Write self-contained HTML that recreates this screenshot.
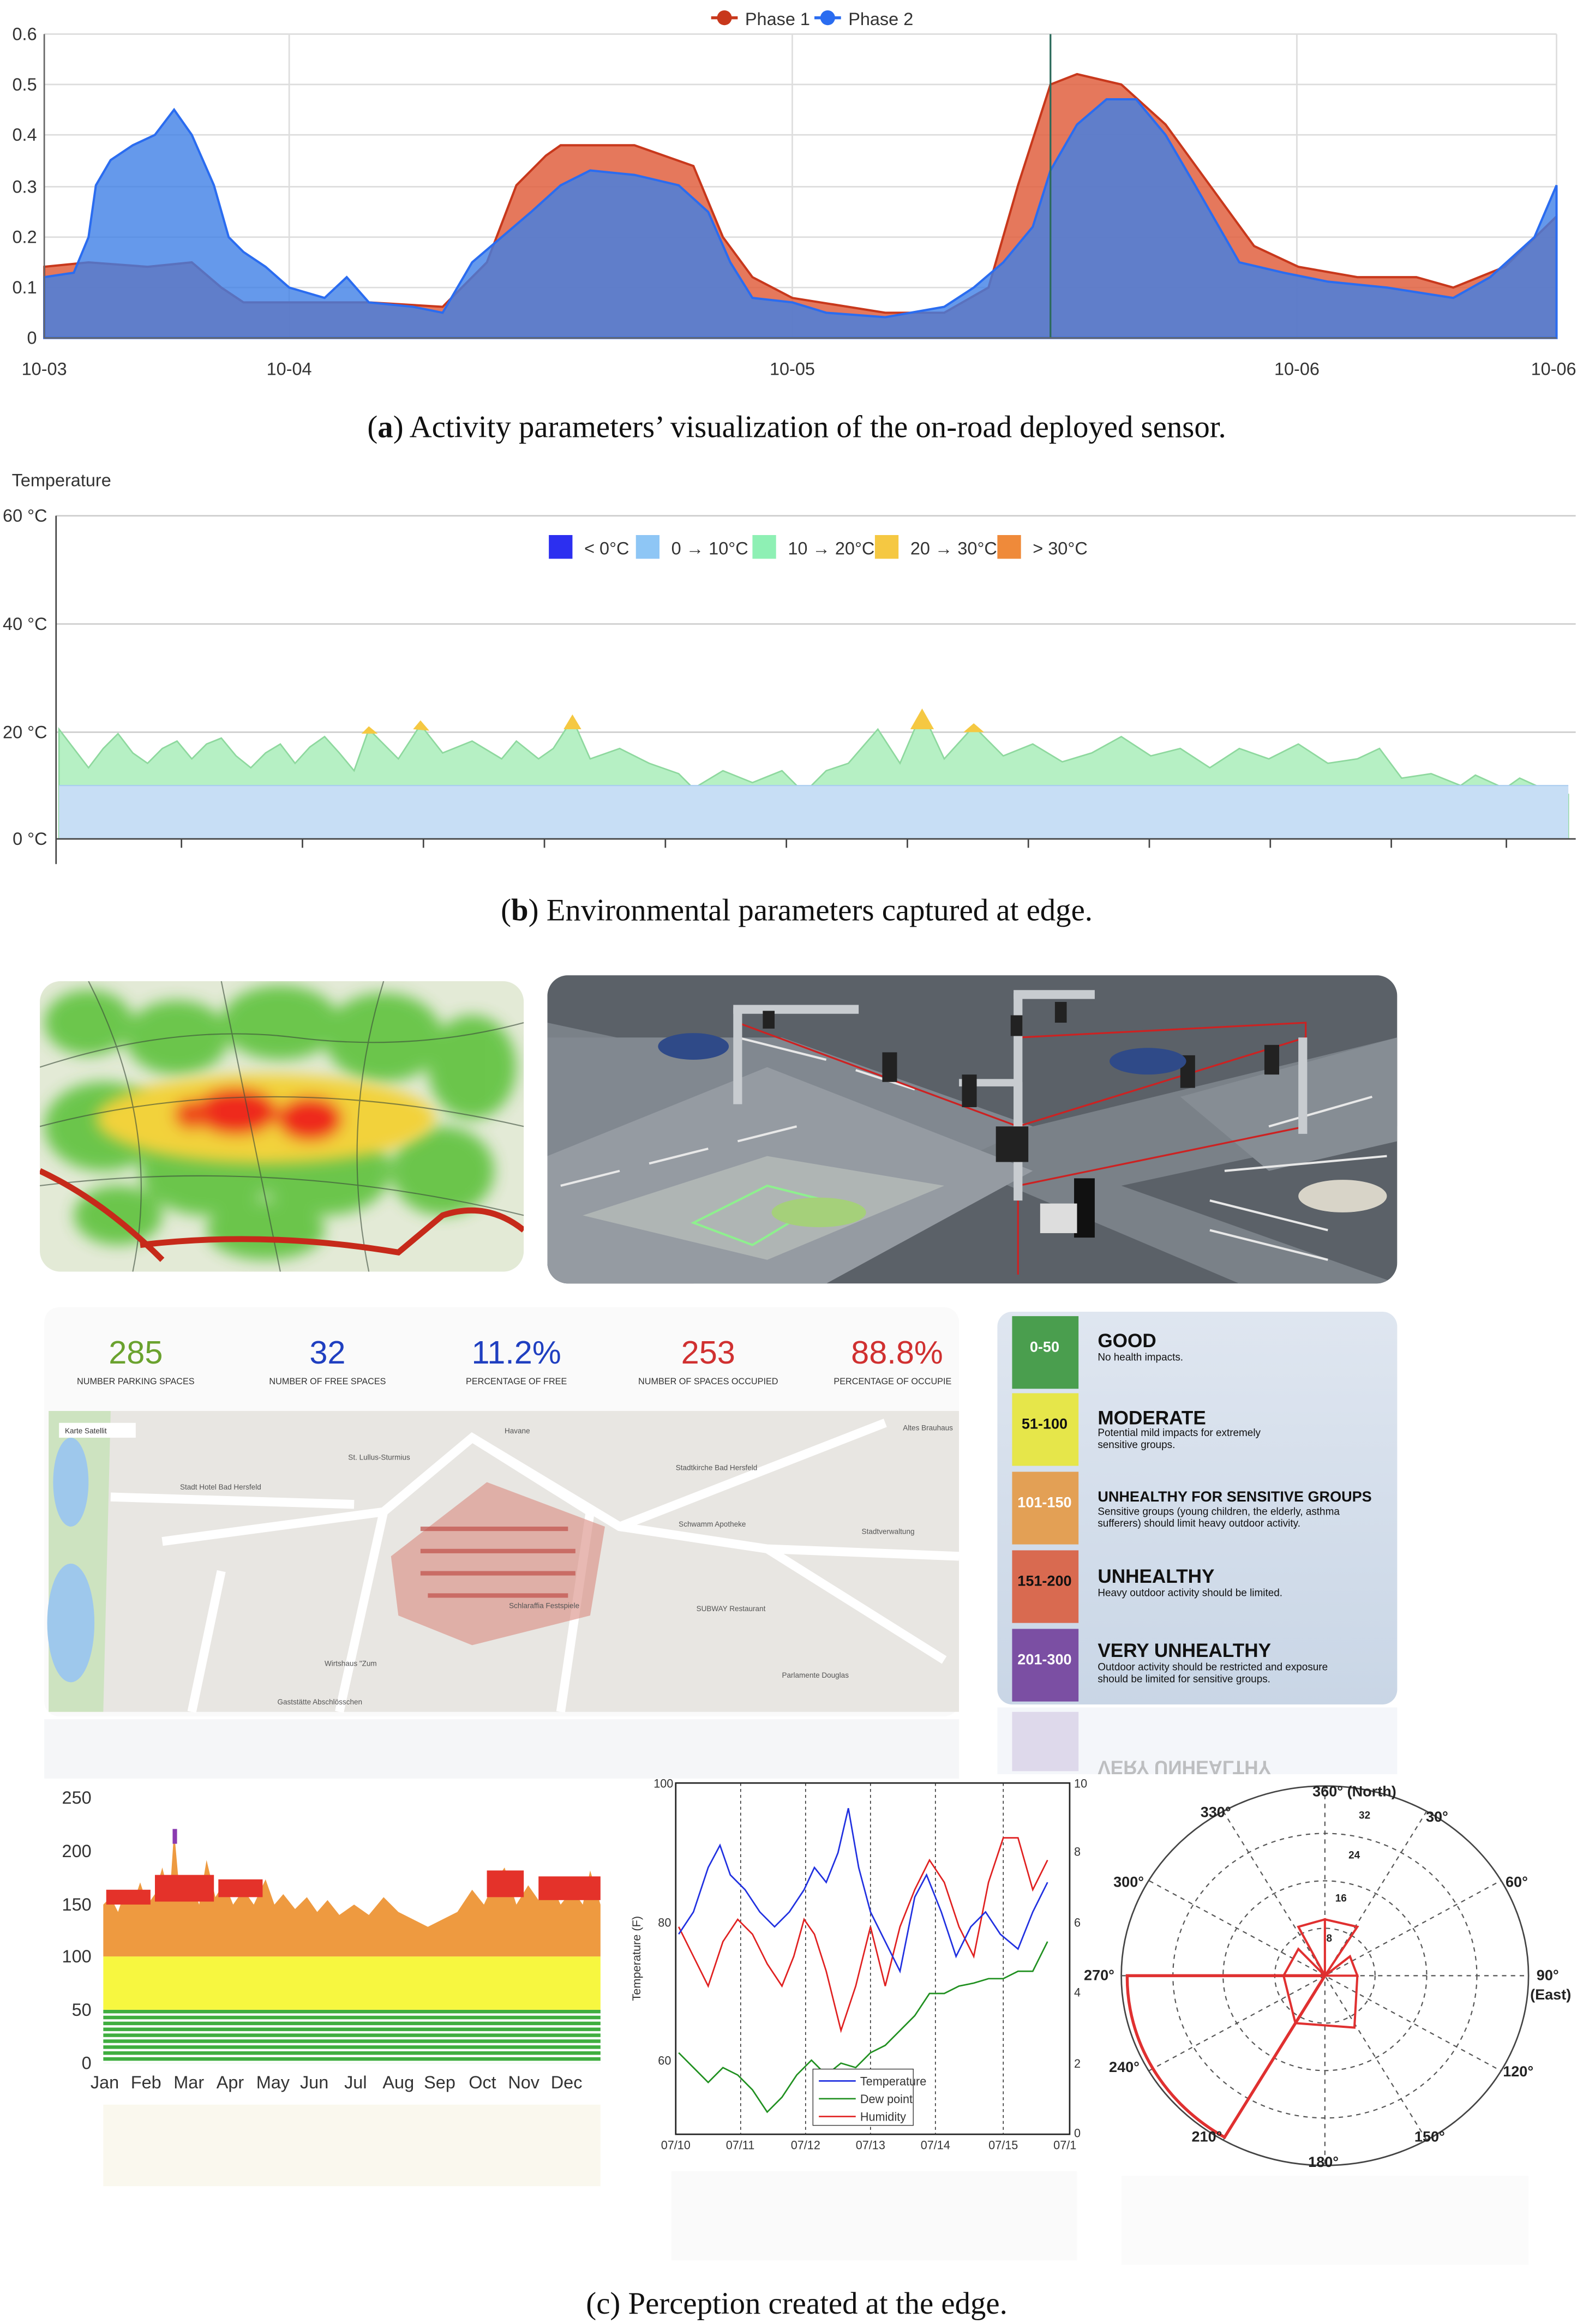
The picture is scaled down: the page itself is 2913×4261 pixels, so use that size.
<!DOCTYPE html>
<html><head><meta charset="utf-8">
<style>
html,body{margin:0;padding:0;background:#fff;}
svg{display:block;}
text{font-family:"Liberation Sans",sans-serif;}
.cap{font-family:"Liberation Serif",serif;font-size:21px;fill:#111;}
.ax{font-size:12px;fill:#333;}
</style></head>
<body>
<svg width="2913" height="4261" viewBox="0 0 1077 1568" preserveAspectRatio="none" xmlns="http://www.w3.org/2000/svg">
<defs>
<filter id="bl" x="-50%" y="-50%" width="200%" height="200%"><feGaussianBlur stdDeviation="9"/></filter>
<filter id="bl3" x="-50%" y="-50%" width="200%" height="200%"><feGaussianBlur stdDeviation="5"/></filter>
<linearGradient id="aqibg" x1="0" y1="0" x2="0" y2="1"><stop offset="0" stop-color="#dfe6f0"/><stop offset="1" stop-color="#c9d6e6"/></linearGradient>
<pattern id="grs" width="4" height="4" patternUnits="userSpaceOnUse"><rect width="4" height="4" fill="#fff"/><rect width="4" height="2.4" fill="#3fae3f"/></pattern>
</defs>

<!-- ===== (a) ===== -->
<g>
<line x1="30" y1="23" x2="1055" y2="23" stroke="#ddd"/>
<line x1="30" y1="57" x2="1055" y2="57" stroke="#ddd"/>
<line x1="30" y1="91" x2="1055" y2="91" stroke="#ddd"/>
<line x1="30" y1="126" x2="1055" y2="126" stroke="#ddd"/>
<line x1="30" y1="160" x2="1055" y2="160" stroke="#ddd"/>
<line x1="30" y1="194" x2="1055" y2="194" stroke="#ddd"/>
<line x1="196" y1="23" x2="196" y2="228" stroke="#ddd"/>
<line x1="537" y1="23" x2="537" y2="228" stroke="#ddd"/>
<line x1="879" y1="23" x2="879" y2="228" stroke="#ddd"/>
<line x1="1055" y1="23" x2="1055" y2="228" stroke="#ddd"/>
<path d="M30,228 L30,180 L60,177 L100,180 L130,177 L150,194 L165,204 L196,204 L250,204 L300,207 L330,177 L350,125 L370,105 L380,98 L430,98 L470,112 L490,160 L510,187 L537,201 L600,211 L640,211 L670,194 L690,125 L712,57 L730,50 L760,57 L790,84 L820,125 L850,166 L880,180 L920,187 L960,187 L985,194 L1020,180 L1055,146 L1055,228 Z" fill="#e0603f" fill-opacity="0.85" stroke="#c8381c" stroke-width="1.5"/>
<path d="M30,228 L30,187 L50,184 L60,160 L65,125 L75,108 L90,98 L105,91 L118,74 L130,91 L145,125 L155,160 L165,170 L180,180 L196,194 L220,201 L235,187 L250,204 L280,207 L300,211 L320,177 L340,160 L360,143 L380,125 L400,115 L430,118 L460,125 L480,143 L495,177 L510,201 L537,204 L560,211 L600,214 L640,207 L660,194 L680,177 L700,153 L712,115 L730,84 L750,67 L770,67 L790,91 L810,125 L840,177 L870,184 L900,190 L940,194 L985,201 L1010,187 L1040,160 L1055,125 L1055,228 Z" fill="#3f7fe6" fill-opacity="0.8" stroke="#2a6cf0" stroke-width="1.5"/>
<line x1="712" y1="23" x2="712" y2="228" stroke="#2b6a5a" stroke-width="1.2"/>
<line x1="30" y1="23" x2="30" y2="228" stroke="#666"/>
<line x1="30" y1="228" x2="1055" y2="228" stroke="#666"/>
<g class="ax" text-anchor="end"><text x="25" y="27">0.6</text><text x="25" y="61">0.5</text><text x="25" y="95">0.4</text><text x="25" y="130">0.3</text><text x="25" y="164">0.2</text><text x="25" y="198">0.1</text><text x="25" y="232">0</text></g>
<g class="ax" text-anchor="middle"><text x="30" y="253">10-03</text><text x="196" y="253">10-04</text><text x="537" y="253">10-05</text><text x="879" y="253">10-06</text><text x="1053" y="253">10-06</text></g>
<line x1="482" y1="12" x2="500" y2="12" stroke="#c8381c" stroke-width="2"/><circle cx="491" cy="12" r="5" fill="#c8381c"/>
<text x="505" y="17" class="ax" font-size="13">Phase 1</text>
<line x1="552" y1="12" x2="570" y2="12" stroke="#2a6cf0" stroke-width="2"/><circle cx="561" cy="12" r="5" fill="#2a6cf0"/>
<text x="575" y="17" class="ax" font-size="13">Phase 2</text>
<text x="540" y="295" class="cap" text-anchor="middle">(<tspan font-weight="bold">a</tspan>) Activity parameters’ visualization of the on-road deployed sensor.</text>
</g>

<!-- ===== (b) ===== -->
<g>
<text x="8" y="328" class="ax">Temperature</text>
<line x1="38" y1="348" x2="1068" y2="348" stroke="#ccc"/>
<line x1="38" y1="421" x2="1068" y2="421" stroke="#ccc"/>
<line x1="38" y1="494" x2="1068" y2="494" stroke="#ccc"/>
<line x1="38" y1="348" x2="38" y2="583" stroke="#444"/>
<g class="ax" text-anchor="end"><text x="32" y="352">60 °C</text><text x="32" y="425">40 °C</text><text x="32" y="498">20 °C</text><text x="32" y="570">0 °C</text></g>
<path d="M40,566 L40,492 L50,505 L60,518 L70,505 L80,495 L90,508 L100,515 L110,505 L120,500 L130,512 L140,502 L150,498 L160,510 L170,518 L180,508 L190,502 L200,515 L210,504 L220,497 L230,508 L240,520 L250,492 L260,502 L270,512 L285,489 L300,508 L320,500 L340,512 L350,500 L365,512 L375,505 L388,485 L400,512 L420,505 L440,515 L460,522 L470,532 L490,520 L510,528 L530,520 L545,535 L560,520 L575,515 L595,492 L610,515 L625,480 L640,512 L660,490 L680,510 L700,502 L720,514 L740,508 L760,497 L780,510 L800,505 L820,518 L840,505 L860,512 L880,502 L900,515 L920,512 L935,505 L950,525 L970,522 L990,530 L1000,523 L1020,532 L1030,525 L1050,534 L1063,536 L1063,566 Z" fill="#b6f0c4" stroke="#8ed89e" stroke-width="1"/>
<path d="M245,495 L250,490 L256,495 Z M280,492 L285,486 L291,493 Z M382,492 L388,482 L394,492 Z M617,492 L625,478 L633,492 Z M653,494 L660,488 L667,494 Z" fill="#f5c842"/>
<rect x="40" y="530" width="1023" height="36" fill="#c7def5"/>
<line x1="40" y1="530" x2="1063" y2="530" stroke="#a8ccef" stroke-width="0.7"/>
<line x1="38" y1="566" x2="1068" y2="566" stroke="#444"/>
<g stroke="#444"><line x1="123" y1="566" x2="123" y2="572"/><line x1="205" y1="566" x2="205" y2="572"/><line x1="287" y1="566" x2="287" y2="572"/><line x1="369" y1="566" x2="369" y2="572"/><line x1="451" y1="566" x2="451" y2="572"/><line x1="533" y1="566" x2="533" y2="572"/><line x1="615" y1="566" x2="615" y2="572"/><line x1="697" y1="566" x2="697" y2="572"/><line x1="779" y1="566" x2="779" y2="572"/><line x1="861" y1="566" x2="861" y2="572"/><line x1="943" y1="566" x2="943" y2="572"/><line x1="1021" y1="566" x2="1021" y2="572"/></g>
<rect x="372" y="361" width="16" height="16" fill="#2c2ff0"/><text x="396" y="374" class="ax">&lt; 0°C</text>
<rect x="431" y="361" width="16" height="16" fill="#8ec6f5"/><text x="455" y="374" class="ax">0 → 10°C</text>
<rect x="510" y="361" width="16" height="16" fill="#8ef0b4"/><text x="534" y="374" class="ax">10 → 20°C</text>
<rect x="593" y="361" width="16" height="16" fill="#f5c842"/><text x="617" y="374" class="ax">20 → 30°C</text>
<rect x="676" y="361" width="16" height="16" fill="#ef8a3a"/><text x="700" y="374" class="ax">&gt; 30°C</text>
<text x="540" y="621" class="cap" text-anchor="middle">(<tspan font-weight="bold">b</tspan>) Environmental parameters captured at edge.</text>
</g>

<!-- heatmap -->
<g>
<clipPath id="c1"><rect x="27" y="662" width="328" height="196" rx="14"/></clipPath>
<g clip-path="url(#c1)">
<rect x="27" y="662" width="328" height="196" fill="#e3ead6"/>
<g filter="url(#bl3)" fill="#5fc23c" opacity="0.9">
<ellipse cx="60" cy="690" rx="30" ry="22"/><ellipse cx="120" cy="700" rx="35" ry="25"/><ellipse cx="190" cy="690" rx="40" ry="25"/><ellipse cx="260" cy="700" rx="40" ry="30"/><ellipse cx="320" cy="720" rx="30" ry="35"/>
<ellipse cx="70" cy="760" rx="40" ry="30"/><ellipse cx="140" cy="790" rx="45" ry="30"/><ellipse cx="220" cy="790" rx="45" ry="30"/><ellipse cx="300" cy="790" rx="35" ry="30"/><ellipse cx="180" cy="830" rx="40" ry="20"/><ellipse cx="80" cy="820" rx="30" ry="20"/>
</g>
<g filter="url(#bl3)">
<ellipse cx="180" cy="755" rx="115" ry="30" fill="#f2d23a"/>
<ellipse cx="160" cy="750" rx="28" ry="16" fill="#ee2a1a"/>
<ellipse cx="210" cy="755" rx="22" ry="15" fill="#ee2a1a"/>
<ellipse cx="130" cy="752" rx="12" ry="10" fill="#ee4a1a"/>
</g>
<g fill="none" stroke="#3a4a3a" stroke-width="0.8" opacity="0.6">
<path d="M27,720 Q120,690 200,700 T355,690"/><path d="M60,662 Q110,760 90,858"/><path d="M150,662 Q170,760 190,858"/><path d="M260,662 Q230,760 250,858"/><path d="M27,800 Q190,780 355,820"/><path d="M27,760 Q180,720 355,760"/>
</g>
<path d="M27,790 Q70,810 110,850 M95,840 Q180,830 270,845 L300,820 Q330,810 355,830" fill="none" stroke="#c62a1a" stroke-width="4"/>
</g>
</g>
<!-- traffic scene -->
<g>
<clipPath id="c2"><rect x="371" y="658" width="576" height="208" rx="14"/></clipPath>
<g clip-path="url(#c2)">
<rect x="371" y="658" width="576" height="208" fill="#5b6168"/>
<polygon points="371,690 700,760 947,700 947,760 760,800 947,866 840,866 660,790 371,866" fill="#7a8188"/>
<polygon points="371,700 530,700 700,760 470,866 371,866" fill="#818890"/>
<polygon points="371,780 520,720 700,790 560,866 371,866" fill="#959ba2"/>
<polygon points="395,820 520,780 640,800 520,850" fill="#dfe6d8" opacity="0.35"/>
<polygon points="800,740 947,700 947,770 860,790" fill="#868d94"/>
<g stroke="#e8e8e8" stroke-width="1.5" fill="none">
<path d="M380,800 L420,790 M440,785 L480,775 M500,770 L540,760 M820,810 L900,830 M820,830 L900,850 M830,790 L940,780 M860,760 L930,740 M500,700 L560,715 M580,722 L620,735"/>
</g>
<polygon points="470,825 520,800 560,810 510,840" fill="none" stroke="#8ef08e" stroke-width="1.5"/>
<path d="M500,690 L690,760 L885,700 M690,760 L690,860 M500,690 L500,740 M690,700 L885,690 L885,760 L690,800" fill="none" stroke="#c22" stroke-width="1.2"/>
<rect x="497" y="680" width="6" height="65" fill="#c8ccd0"/><rect x="497" y="678" width="85" height="6" fill="#c8ccd0"/>
<rect x="687" y="670" width="6" height="110" fill="#c8ccd0"/><rect x="687" y="668" width="55" height="6" fill="#c8ccd0"/>
<rect x="880" y="700" width="6" height="65" fill="#c8ccd0"/>
<rect x="687" y="730" width="6" height="80" fill="#c8ccd0"/><rect x="650" y="728" width="40" height="5" fill="#c8ccd0"/>
<rect x="598" y="710" width="10" height="20" fill="#222"/><rect x="652" y="725" width="10" height="22" fill="#222"/><rect x="675" y="760" width="22" height="24" fill="#222"/><rect x="800" y="712" width="10" height="22" fill="#222"/><rect x="857" y="705" width="10" height="20" fill="#222"/>
<rect x="685" y="685" width="8" height="14" fill="#222"/><rect x="715" y="676" width="8" height="14" fill="#222"/><rect x="517" y="682" width="8" height="12" fill="#222"/>
<ellipse cx="470" cy="706" rx="24" ry="9" fill="#2f4a88"/><ellipse cx="778" cy="716" rx="26" ry="9" fill="#2f4a88"/>
<ellipse cx="555" cy="818" rx="32" ry="10" fill="#a5d07a"/><ellipse cx="910" cy="807" rx="30" ry="11" fill="#d8d4c8"/>
<rect x="728" y="795" width="14" height="40" fill="#111"/><rect x="705" y="812" width="25" height="20" fill="#ddd"/>
</g>
</g>

<!-- parking dashboard -->
<g>
<rect x="30" y="882" width="620" height="276" rx="10" fill="#fafafa"/>
<g font-size="22" text-anchor="middle"><text x="92" y="920" fill="#6aa22e">285</text><text x="222" y="920" fill="#1f3fc0">32</text><text x="350" y="920" fill="#1f3fc0">11.2%</text><text x="480" y="920" fill="#d03030">253</text><text x="608" y="920" fill="#d03030">88.8%</text></g>
<g font-size="6" text-anchor="middle" fill="#333"><text x="92" y="934">NUMBER PARKING SPACES</text><text x="222" y="934">NUMBER OF FREE SPACES</text><text x="350" y="934">PERCENTAGE OF FREE</text><text x="480" y="934">NUMBER OF SPACES OCCUPIED</text><text x="605" y="934">PERCENTAGE OF OCCUPIE</text></g>
<rect x="33" y="952" width="617" height="203" fill="#e8e6e2"/>
<path d="M33,952 L75,952 L70,1155 L33,1155 Z" fill="#cde3c0"/>
<ellipse cx="48" cy="1000" rx="12" ry="30" fill="#9ec8ec"/><ellipse cx="48" cy="1095" rx="16" ry="40" fill="#9ec8ec"/>
<g fill="none" stroke="#fff" stroke-width="6">
<path d="M110,1040 L260,1020 L320,970 L420,1030 L520,1045 L650,1050"/><path d="M75,1010 L240,1015"/><path d="M260,1020 L230,1155"/><path d="M320,970 L400,1020 L380,1155"/><path d="M420,1030 L600,960"/><path d="M520,1045 L640,1120"/><path d="M130,1155 L150,1060"/>
</g>
<polygon points="265,1050 330,1000 410,1030 400,1090 320,1110 270,1090" fill="#d88a80" opacity="0.6"/>
<g fill="#c0504a" opacity="0.7"><rect x="285" y="1030" width="100" height="3"/><rect x="285" y="1045" width="105" height="3"/><rect x="285" y="1060" width="105" height="3"/><rect x="290" y="1075" width="95" height="3"/></g>
<g font-size="5" fill="#555"><text x="122" y="1005">Stadt Hotel Bad Hersfeld</text><text x="236" y="985">St. Lullus-Sturmius</text><text x="458" y="992">Stadtkirche Bad Hersfeld</text><text x="460" y="1030">Schwamm Apotheke</text><text x="584" y="1035">Stadtverwaltung</text><text x="220" y="1124">Wirtshaus "Zum</text><text x="188" y="1150">Gaststätte Abschlösschen</text><text x="530" y="1132">Parlamente Douglas</text><text x="472" y="1087">SUBWAY Restaurant</text><text x="345" y="1085">Schlaraffia Festspiele</text><text x="612" y="965">Altes Brauhaus</text><text x="342" y="967">Havane</text></g>
<rect x="40" y="960" width="52" height="10" fill="#fff"/><text x="44" y="967" font-size="5" fill="#333">Karte   Satellit</text>
<rect x="30" y="1160" width="620" height="40" fill="#eef0f3" opacity="0.6"/>
</g>

<!-- AQI -->
<g>
<rect x="676" y="885" width="271" height="265" rx="10" fill="url(#aqibg)"/>
<rect x="686" y="888" width="45" height="49" fill="#4a9e4e"/><text x="708" y="912" font-size="10" font-weight="bold" fill="#fff" text-anchor="middle">0-50</text>
<rect x="686" y="940" width="45" height="49" fill="#e6e64a"/><text x="708" y="964" font-size="10" font-weight="bold" fill="#111" text-anchor="middle">51-100</text>
<rect x="686" y="993" width="45" height="49" fill="#e3a055"/><text x="708" y="1017" font-size="10" font-weight="bold" fill="#fff" text-anchor="middle">101-150</text>
<rect x="686" y="1046" width="45" height="49" fill="#d96a50"/><text x="708" y="1070" font-size="10" font-weight="bold" fill="#111" text-anchor="middle">151-200</text>
<rect x="686" y="1099" width="45" height="49" fill="#7b4fa3"/><text x="708" y="1123" font-size="10" font-weight="bold" fill="#fff" text-anchor="middle">201-300</text>
<g fill="#111"><text x="744" y="909" font-size="13" font-weight="bold">GOOD</text><text x="744" y="918" font-size="7">No health impacts.</text>
<text x="744" y="961" font-size="13" font-weight="bold">MODERATE</text><text x="744" y="969" font-size="7">Potential mild impacts for extremely</text><text x="744" y="977" font-size="7">sensitive groups.</text>
<text x="744" y="1013" font-size="10" font-weight="bold">UNHEALTHY FOR SENSITIVE GROUPS</text><text x="744" y="1022" font-size="7">Sensitive groups (young children, the elderly, asthma</text><text x="744" y="1030" font-size="7">sufferers) should limit heavy outdoor activity.</text>
<text x="744" y="1068" font-size="13" font-weight="bold">UNHEALTHY</text><text x="744" y="1077" font-size="7">Heavy outdoor activity should be limited.</text>
<text x="744" y="1118" font-size="13" font-weight="bold">VERY UNHEALTHY</text><text x="744" y="1127" font-size="7">Outdoor activity should be restricted and exposure</text><text x="744" y="1135" font-size="7">should be limited for sensitive groups.</text></g>
<rect x="686" y="1155" width="45" height="40" fill="#7b4fa3" opacity="0.25"/>
<rect x="676" y="1152" width="271" height="45" fill="#dfe6f0" opacity="0.35"/>
<text x="744" y="1194" font-size="13" font-weight="bold" fill="#888" opacity="0.5" transform="translate(0,2382) scale(1,-1)">VERY UNHEALTHY</text>
</g>

<!-- bar chart -->
<g>
<g class="ax" text-anchor="end" font-size="11"><text x="62" y="1217">250</text><text x="62" y="1253">200</text><text x="62" y="1289">150</text><text x="62" y="1324">100</text><text x="62" y="1360">50</text><text x="62" y="1396">0</text></g>
<rect x="70" y="1356" width="337" height="36" fill="url(#grs)"/>
<rect x="70" y="1320" width="337" height="36" fill="#f7f740"/>
<path d="M70,1320 L70,1285 L75,1280 L80,1290 L85,1275 L90,1285 L95,1270 L100,1285 L105,1278 L110,1260 L115,1280 L118,1235 L122,1280 L128,1265 L135,1285 L140,1255 L146,1280 L152,1270 L158,1285 L165,1275 L172,1285 L180,1268 L186,1285 L192,1278 L200,1288 L208,1280 L215,1290 L222,1282 L230,1292 L240,1285 L250,1292 L260,1280 L270,1290 L280,1295 L290,1300 L300,1295 L310,1290 L320,1275 L328,1285 L335,1270 L342,1260 L350,1285 L358,1272 L365,1282 L372,1268 L380,1285 L388,1275 L395,1285 L400,1262 L407,1285 L407,1320 Z" fill="#ee9a40"/>
<g fill="#e4322a"><rect x="72" y="1275" width="30" height="10"/><rect x="105" y="1265" width="40" height="18"/><rect x="148" y="1268" width="30" height="12"/><rect x="330" y="1262" width="25" height="18"/><rect x="365" y="1266" width="42" height="16"/></g>
<rect x="117" y="1234" width="3" height="10" fill="#8a3ab0"/>
<g class="ax" text-anchor="middle" font-size="11"><text x="71" y="1409">Jan</text><text x="99" y="1409">Feb</text><text x="128" y="1409">Mar</text><text x="156" y="1409">Apr</text><text x="185" y="1409">May</text><text x="213" y="1409">Jun</text><text x="241" y="1409">Jul</text><text x="270" y="1409">Aug</text><text x="298" y="1409">Sep</text><text x="327" y="1409">Oct</text><text x="355" y="1409">Nov</text><text x="384" y="1409">Dec</text></g>
<rect x="70" y="1420" width="337" height="55" fill="#f0e8c8" opacity="0.3"/>
</g>

<!-- line chart -->
<g>
<rect x="458" y="1203" width="267" height="237" fill="none" stroke="#222"/>
<g stroke="#333" stroke-dasharray="2,2" stroke-width="0.6"><line x1="502" y1="1203" x2="502" y2="1440"/><line x1="546" y1="1203" x2="546" y2="1440"/><line x1="590" y1="1203" x2="590" y2="1440"/><line x1="634" y1="1203" x2="634" y2="1440"/><line x1="680" y1="1203" x2="680" y2="1440"/></g>
<path d="M460,1300 L470,1320 L480,1340 L490,1310 L500,1295 L510,1305 L520,1325 L530,1340 L538,1320 L545,1295 L552,1305 L560,1330 L570,1370 L580,1340 L590,1300 L600,1340 L610,1300 L620,1275 L630,1255 L640,1270 L650,1300 L660,1320 L670,1270 L680,1240 L690,1240 L700,1275 L710,1255" fill="none" stroke="#e02020" stroke-width="1"/>
<path d="M460,1305 L470,1290 L480,1260 L488,1245 L495,1265 L505,1275 L515,1290 L525,1300 L535,1290 L545,1275 L552,1260 L560,1270 L568,1250 L575,1220 L582,1260 L590,1290 L600,1310 L610,1330 L620,1280 L628,1265 L638,1290 L648,1320 L658,1300 L668,1290 L678,1305 L690,1315 L700,1290 L710,1270" fill="none" stroke="#2030e0" stroke-width="1"/>
<path d="M460,1385 L470,1395 L480,1405 L490,1395 L500,1400 L510,1410 L520,1425 L530,1415 L540,1400 L550,1390 L560,1400 L570,1392 L580,1395 L590,1385 L600,1380 L610,1370 L620,1360 L630,1345 L640,1345 L650,1340 L660,1338 L670,1335 L680,1335 L690,1330 L700,1330 L710,1310" fill="none" stroke="#209020" stroke-width="1"/>
<rect x="551" y="1396" width="68" height="38" fill="#fff" stroke="#333" stroke-width="0.5"/>
<g font-size="8" fill="#333"><line x1="555" y1="1404" x2="580" y2="1404" stroke="#2030e0"/><text x="583" y="1407">Temperature</text><line x1="555" y1="1416" x2="580" y2="1416" stroke="#209020"/><text x="583" y="1419">Dew point</text><line x1="555" y1="1428" x2="580" y2="1428" stroke="#e02020"/><text x="583" y="1431">Humidity</text></g>
<g font-size="8" fill="#333"><text x="443" y="1206">100</text><text x="446" y="1300">80</text><text x="446" y="1393">60</text><text x="728" y="1206">10</text><text x="728" y="1252">8</text><text x="728" y="1300">6</text><text x="728" y="1347">4</text><text x="728" y="1395">2</text><text x="728" y="1442">0</text>
<text x="448" y="1450">07/10</text><text x="492" y="1450">07/11</text><text x="536" y="1450">07/12</text><text x="580" y="1450">07/13</text><text x="624" y="1450">07/14</text><text x="670" y="1450">07/15</text><text x="714" y="1450">07/1</text>
<text transform="translate(434,1350) rotate(-90)">Temperature (F)</text></g>
<rect x="455" y="1465" width="275" height="60" fill="#eee" opacity="0.3"/>
</g>

<!-- polar chart -->
<g>
<ellipse cx="898" cy="1333" rx="138" ry="128" fill="none" stroke="#444" stroke-width="1"/>
<g fill="none" stroke="#555" stroke-dasharray="3,3" stroke-width="0.8">
<ellipse cx="898" cy="1333" rx="103" ry="96"/><ellipse cx="898" cy="1333" rx="69" ry="64"/><ellipse cx="898" cy="1333" rx="34" ry="32"/>
<line x1="760" y1="1333" x2="1036" y2="1333"/><line x1="898" y1="1205" x2="898" y2="1461"/>
<line x1="829" y1="1222" x2="967" y2="1444"/><line x1="967" y1="1222" x2="829" y2="1444"/>
<line x1="779" y1="1269" x2="1017" y2="1397"/><line x1="779" y1="1397" x2="1017" y2="1269"/>
</g>
<path d="M898,1333 L764,1333 A136,126 0 0 0 830,1442 Z" fill="none" stroke="#e03030" stroke-width="2"/>
<path d="M898,1333 L898,1295 L880,1300 Z M898,1333 L920,1300 L898,1295 Z M898,1333 L870,1333 L880,1315 Z M898,1333 L920,1333 L915,1320 Z M898,1333 L870,1333 L878,1365 Z M898,1333 L920,1333 L918,1368 L878,1365 Z" fill="none" stroke="#e03030" stroke-width="1.5"/>
<g font-size="10" font-weight="bold" fill="#222" text-anchor="middle"><text x="918" y="1212">360° (North)</text><text x="824" y="1226">330°</text><text x="974" y="1229">30°</text><text x="765" y="1273">300°</text><text x="1028" y="1273">60°</text><text x="745" y="1336">270°</text><text x="1049" y="1336">90°</text><text x="1051" y="1349">(East)</text><text x="762" y="1398">240°</text><text x="1029" y="1401">120°</text><text x="818" y="1445">210°</text><text x="969" y="1445">150°</text><text x="897" y="1462">180°</text></g>
<g font-size="7" font-weight="bold" fill="#222"><text x="921" y="1227">32</text><text x="914" y="1254">24</text><text x="905" y="1283">16</text><text x="899" y="1310">8</text></g>
<rect x="760" y="1468" width="276" height="60" fill="#eee" opacity="0.25"/>
</g>

<text x="540" y="1561" class="cap" text-anchor="middle">(c) Perception created at the edge.</text>
</svg>
</body></html>
